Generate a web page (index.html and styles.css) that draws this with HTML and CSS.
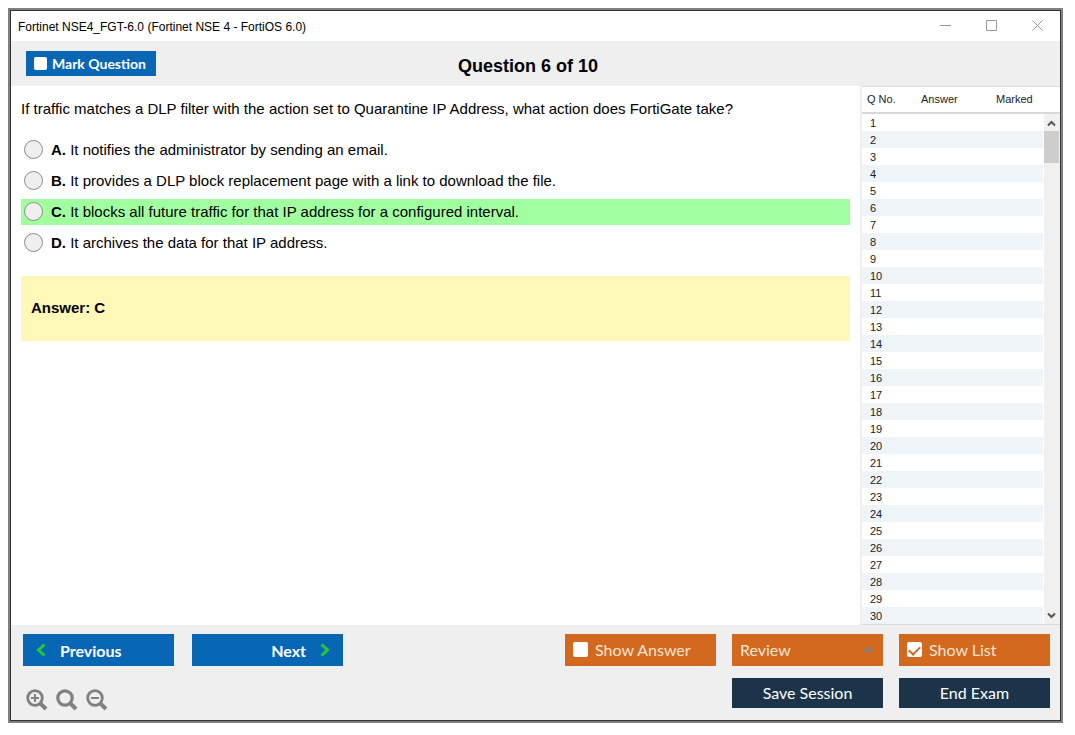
FILE: index.html
```
<!DOCTYPE html>
<html lang="en">
<head>
    <meta charset="UTF-8">
    <meta name="viewport" content="width=device-width, initial-scale=1.0">
    <title>Fortinet NSE4_FGT-6.0</title>
    <link rel="stylesheet" href="styles.css">
</head>
<body>
    <div class="window">
        <header class="titlebar">
            <span class="caption">Fortinet NSE4_FGT-6.0 (Fortinet NSE 4 - FortiOS 6.0)</span>
            <button class="win-btn" aria-label="Minimize">
                <svg width="11" height="11" viewBox="0 0 11 11"><path d="M0 5.5H11"/></svg>
            </button>
            <button class="win-btn" aria-label="Maximize">
                <svg width="11" height="11" viewBox="0 0 11 11"><path d="M.5 .5H10.5V10.5H.5Z"/></svg>
            </button>
            <button class="win-btn" aria-label="Close">
                <svg width="11" height="11" viewBox="0 0 11 11"><path d="M.5 .5L10.5 10.5M10.5 .5L.5 10.5"/></svg>
            </button>
        </header>

        <div class="toolbar">
            <label class="mark"><input type="checkbox" class="check small">Mark Question</label>
            <h1>Question 6 of 10</h1>
        </div>

        <div class="main">
            <main class="question">
                <p class="text">If traffic matches a DLP filter with the action set to Quarantine IP Address, what action does FortiGate take?</p>
                <div class="options">
                    <label class="option"><input type="radio" name="answer"><span><b>A.</b> It notifies the administrator by sending an email.</span></label>
                    <label class="option"><input type="radio" name="answer"><span><b>B.</b> It provides a DLP block replacement page with a link to download the file.</span></label>
                    <label class="option correct"><input type="radio" name="answer"><span><b>C.</b> It blocks all future traffic for that IP address for a configured interval.</span></label>
                    <label class="option"><input type="radio" name="answer"><span><b>D.</b> It archives the data for that IP address.</span></label>
                </div>
                <div class="answer">Answer: C</div>
            </main>

            <aside class="list">
                <table>
                    <thead>
                        <tr><th class="no">Q No.</th><th class="ans">Answer</th><th>Marked</th></tr>
                    </thead>
                    <tbody>
                        <tr><td>1</td><td></td><td></td></tr>
                        <tr><td>2</td><td></td><td></td></tr>
                        <tr><td>3</td><td></td><td></td></tr>
                        <tr><td>4</td><td></td><td></td></tr>
                        <tr><td>5</td><td></td><td></td></tr>
                        <tr><td>6</td><td></td><td></td></tr>
                        <tr><td>7</td><td></td><td></td></tr>
                        <tr><td>8</td><td></td><td></td></tr>
                        <tr><td>9</td><td></td><td></td></tr>
                        <tr><td>10</td><td></td><td></td></tr>
                        <tr><td>11</td><td></td><td></td></tr>
                        <tr><td>12</td><td></td><td></td></tr>
                        <tr><td>13</td><td></td><td></td></tr>
                        <tr><td>14</td><td></td><td></td></tr>
                        <tr><td>15</td><td></td><td></td></tr>
                        <tr><td>16</td><td></td><td></td></tr>
                        <tr><td>17</td><td></td><td></td></tr>
                        <tr><td>18</td><td></td><td></td></tr>
                        <tr><td>19</td><td></td><td></td></tr>
                        <tr><td>20</td><td></td><td></td></tr>
                        <tr><td>21</td><td></td><td></td></tr>
                        <tr><td>22</td><td></td><td></td></tr>
                        <tr><td>23</td><td></td><td></td></tr>
                        <tr><td>24</td><td></td><td></td></tr>
                        <tr><td>25</td><td></td><td></td></tr>
                        <tr><td>26</td><td></td><td></td></tr>
                        <tr><td>27</td><td></td><td></td></tr>
                        <tr><td>28</td><td></td><td></td></tr>
                        <tr><td>29</td><td></td><td></td></tr>
                        <tr><td>30</td><td></td><td></td></tr>
                    </tbody>
                </table>
                <div class="scrollbar">
                    <svg width="16" height="17" viewBox="0 0 16 17"><path d="M4 11.5L7.5 8L11 11.5"/></svg>
                    <div class="thumb"></div>
                    <svg width="16" height="17" viewBox="0 0 16 17"><path d="M4 6.5L7.5 10L11 6.5"/></svg>
                </div>
            </aside>
        </div>

        <footer class="footer">
            <div class="left">
                <div class="nav">
                    <button class="btn blue prev">
                        <svg width="10" height="14" viewBox="0 0 10 14"><path d="M8.5 1.5L2.5 7L8.5 12.5"/></svg>
                        Previous
                    </button>
                    <button class="btn blue next">
                        Next
                        <svg width="10" height="14" viewBox="0 0 10 14"><path d="M1.5 1.5L7.5 7L1.5 12.5"/></svg>
                    </button>
                </div>
                <div class="zoom">
                    <button aria-label="Zoom in">
                        <svg width="22" height="22" viewBox="0 0 22 22"><circle cx="9" cy="9" r="7.3"/><path class="handle" d="M14.3 14.3L20 20"/><path class="sign" d="M5 9H13M9 5V13"/></svg>
                    </button>
                    <button aria-label="Reset zoom">
                        <svg width="22" height="22" viewBox="0 0 22 22"><circle class="thick" cx="9" cy="9" r="7.2"/><path class="handle" d="M14.3 14.3L20 20"/></svg>
                    </button>
                    <button aria-label="Zoom out">
                        <svg width="22" height="22" viewBox="0 0 22 22"><circle cx="9" cy="9" r="7.3"/><path class="handle" d="M14.3 14.3L20 20"/><path class="sign" d="M5 9H13"/></svg>
                    </button>
                </div>
            </div>
            <div class="right">
                <label class="btn orange"><input type="checkbox" class="check">Show Answer</label>
                <div class="btn orange review">
                    <select aria-label="Review"><option>Review</option></select>
                    <svg width="10" height="6" viewBox="0 0 10 6"><path d="M5 0L10 6H0Z"/></svg>
                </div>
                <label class="btn orange"><input type="checkbox" class="check" checked>Show List</label>
                <button class="btn dark save">Save Session</button>
                <button class="btn dark">End Exam</button>
            </div>
        </footer>
    </div>
</body>
</html>
```
FILE: styles.css
```
*{margin: 0; padding: 0; box-sizing: border-box;}
body{
    min-height: 100vh;
    padding: 8px 12px 12px 8px;
    display: flex;
    background-color: #fff;
    color: #000;
    font-family: "Liberation Sans", Arial, sans-serif;
    font-size: 15px;
}
button, select{
    border: none;
    background: none;
    font: inherit;
    color: inherit;
}
button, label, select{
    cursor: pointer;
}
.window{
    flex: 1;
    display: flex;
    flex-direction: column;
    border: 1px solid #333;
    outline: 2px solid #808080;
    margin: 2px;
}

/* title bar */
.titlebar{
    height: 30px;
    display: flex;
    align-items: stretch;
    padding-left: 7px;
}
.caption{
    flex: 1;
    font-size: 12px;
    line-height: 32px;
}
.win-btn{
    width: 46px;
    padding-bottom: 2px;
    display: flex;
    align-items: center;
    justify-content: center;
}
.win-btn svg{
    fill: none;
    stroke: #999;
}

/* toolbar */
.toolbar{
    height: 45px;
    padding: 0 30px 0 15px;
    display: grid;
    grid-template-columns: 1fr auto 1fr;
    align-items: center;
    background-color: #efefef;
}
.toolbar h1{
    font-size: 18px;
    line-height: 20px;
    padding-top: 4px;
}
.mark{
    justify-self: start;
    width: 130px;
    height: 25px;
    padding-left: 8px;
    display: flex;
    align-items: center;
    gap: 5px;
    background-color: #0867b5;
    color: #fff;
    font: bold 14px Lato, sans-serif;
}
.check{
    appearance: none;
    width: 15px;
    height: 15px;
    border-radius: 2px;
    background-color: #fff;
    display: flex;
    justify-content: center;
}
.check.small{
    width: 13px;
    height: 13px;
}
.check:checked::after{
    content: "";
    width: 5px;
    height: 9px;
    margin-top: 2px;
    border: solid #d2691e;
    border-width: 0 2px 2px 0;
    transform: rotate(45deg);
}

/* question */
.main{
    flex: 1;
    display: flex;
}
.question{
    flex: 1;
    padding: 14px 10px 0;
}
.text{
    line-height: 18px;
    margin-bottom: 19px;
}
.options{
    display: flex;
    flex-direction: column;
    gap: 5px;
}
.option{
    min-height: 26px;
    padding: 0 0 2px 3px;
    display: flex;
    align-items: center;
    gap: 8px;
}
.option input{
    appearance: none;
    width: 19px;
    height: 19px;
    border: 1px solid #8c8c8c;
    border-radius: 50%;
    background-color: #efefef;
}
.option input:checked{
    background-color: #555;
}
.correct{
    background-color: #a2ff9f;
}
.answer{
    margin-top: 20px;
    padding: 23px 10px 24px;
    line-height: 18px;
    font-weight: bold;
    background-color: #fff8b9;
}

/* question list */
.list{
    width: 200px;
    position: relative;
    border-left: 2px solid #efefef;
    border-bottom: 1px solid #d9d9d9;
}
table{
    width: 100%;
    table-layout: fixed;
    border-collapse: separate;
    border-spacing: 0;
    font-size: 11px;
    color: #222;
}
th{
    height: 28px;
    padding: 0 0 2px 5px;
    border-top: 1px solid #d9d9d9;
    border-bottom: 2px solid #d9d9d9;
    font-weight: normal;
    text-align: left;
}
.no{
    width: 54px;
}
.ans{
    width: 75px;
}
td{
    height: 17px;
    line-height: 15px;
    padding: 2px 0 0 8px;
}
tbody tr:nth-child(even){
    background-color: #eff4f9;
}
.scrollbar{
    position: absolute;
    top: 28px;
    right: 0;
    bottom: 0;
    width: 17px;
    display: flex;
    flex-direction: column;
    background-color: #f0f0f0;
    border-left: 1px solid #fff;
}
.scrollbar svg{
    fill: none;
    stroke: #555;
    stroke-width: 2;
}
.thumb{
    height: 32px;
    margin-right: 1px;
    margin-bottom: auto;
    background-color: #cdcdcd;
}

/* footer */
.footer{
    padding: 9px 10px 9px 12px;
    display: flex;
    justify-content: space-between;
    background-color: #efefef;
}
.nav{
    display: flex;
    gap: 18px;
}
.btn{
    width: 151px;
    height: 32px;
    padding: 0 8px 2px;
    display: flex;
    align-items: center;
    gap: 7px;
    color: #fff;
    font-family: Lato, sans-serif;
    font-size: 16px;
}
.blue{
    background-color: #0867b5;
    font-weight: bold;
    padding: 0 13px;
    gap: 14px;
}
.blue svg{
    fill: none;
    stroke: #2c3;
    stroke-width: 3;
}
.next{
    justify-content: flex-end;
}
.orange{
    background-color: #d2691e;
    color: #fbe6d5;
}
.dark{
    height: 30px;
    justify-content: center;
    background-color: #1b344a;
}
.zoom{
    display: flex;
    gap: 8px;
    padding: 23px 0 0 3px;
}
.zoom button{
    width: 22px;
    height: 22px;
}
.zoom svg{
    display: block;
    fill: none;
    stroke: #808080;
    stroke-width: 2.8;
}
.zoom .thick{
    stroke-width: 3.2;
}
.zoom .handle{
    stroke-width: 4;
}
.zoom .sign{
    stroke-width: 2;
}
.right{
    display: grid;
    grid-template-columns: repeat(3, auto);
    align-content: start;
    gap: 12px 16px;
}
.review select{
    flex: 1;
    min-width: 0;
    appearance: none;
}
.review svg{
    flex-shrink: 0;
    margin-right: 2px;
    fill: #808080;
}
.save{
    grid-column: 2;
}
```
